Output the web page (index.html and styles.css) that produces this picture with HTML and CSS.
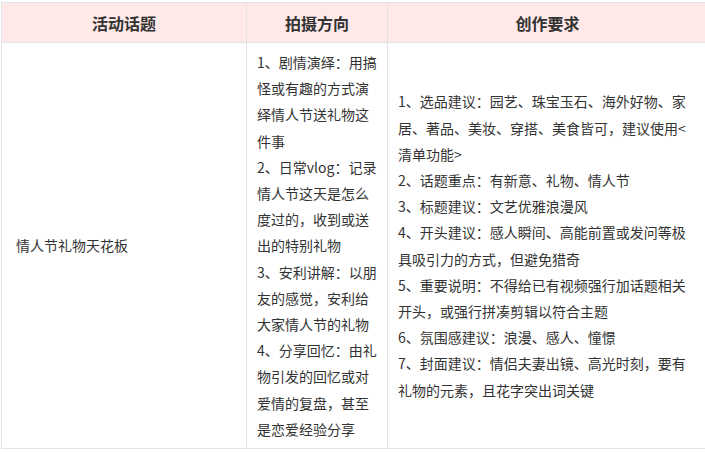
FILE: index.html
```html
<!DOCTYPE html>
<html lang="zh-CN">
<head>
<meta charset="utf-8">
<title>活动话题</title>
<link rel="stylesheet" href="styles.css">
</head>
<body>
<div class="wrap">
<table class="topic-table">
  <colgroup>
    <col class="c1">
    <col class="c2">
    <col class="c3">
  </colgroup>
  <thead>
    <tr>
      <th>活动话题</th>
      <th>拍摄方向</th>
      <th>创作要求</th>
    </tr>
  </thead>
  <tbody>
    <tr>
      <td class="topic">情人节礼物天花板</td>
      <td class="direction">1、剧情演绎：用搞怪或有趣的方式演绎情人节送礼物这件事<br>2、日常vlog：记录情人节这天是怎么度过的，收到或送出的特别礼物<br>3、安利讲解：以朋友的感觉，安利给大家情人节的礼物<br>4、分享回忆：由礼物引发的回忆或对爱情的复盘，甚至是恋爱经验分享</td>
      <td class="require">1、选品建议：园艺、珠宝玉石、海外好物、家居、著品、美妆、穿搭、美食皆可，建议使用&lt;清单功能&gt;<br>2、话题重点：有新意、礼物、情人节<br>3、标题建议：文艺优雅浪漫风<br>4、开头建议：感人瞬间、高能前置或发问等极具吸引力的方式，但避免猎奇<br>5、重要说明：不得给已有视频强行加话题相关开头，或强行拼凑剪辑以符合主题<br>6、氛围感建议：浪漫、感人、憧憬<br>7、封面建议：情侣夫妻出镜、高光时刻，要有礼物的元素，且花字突出词关键</td>
    </tr>
  </tbody>
</table>
</div>
</body>
</html>
```
FILE: styles.css
```css
html, body {
  margin: 0;
  padding: 0;
  background: #ffffff;
  overflow: hidden;
}
.wrap {
  padding: 2px 0 0 1px;
}
.topic-table {
  width: 706px;
  border-collapse: collapse;
  table-layout: fixed;
  font-family: "Noto Sans CJK SC", "Noto Sans", sans-serif;
  color: #333333;
}
.c1 { width: 245px; }
.c2 { width: 141px; }
.c3 { width: 320px; }
.topic-table th,
.topic-table td {
  border: 1px solid #e3e3e3;
}
.topic-table th {
  background: #ffe8e8;
  height: 39px;
  padding: 0;
  font-size: 16px;
  font-weight: 700;
  text-align: center;
  vertical-align: middle;
  line-height: 20px;
}
.topic-table td {
  font-size: 14px;
  line-height: 26.2px;
  padding: 6px 10px;
  vertical-align: middle;
  text-align: left;
}
.topic-table td.topic {
  padding-left: 14px;
}
```
